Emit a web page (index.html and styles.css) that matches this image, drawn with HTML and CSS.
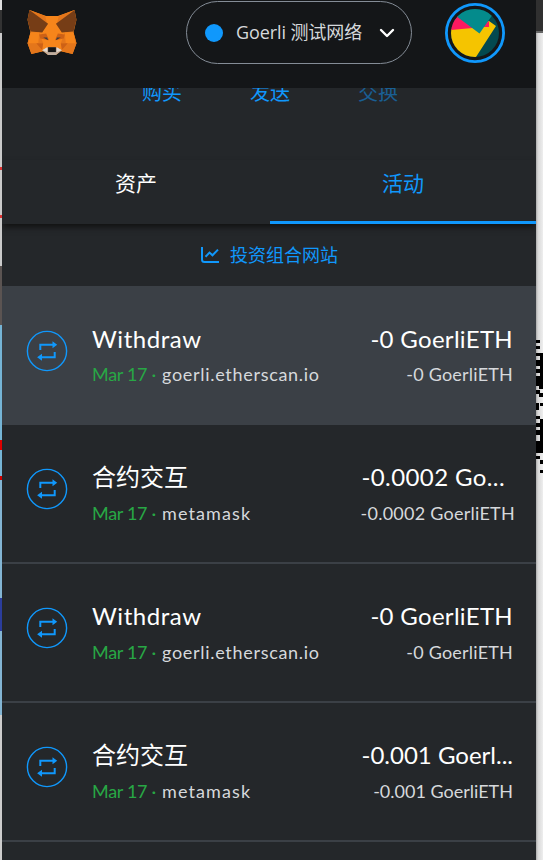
FILE: index.html
```html
<!DOCTYPE html>
<html lang="zh-CN">
<head>
<meta charset="utf-8">
<title>MetaMask</title>
<link rel="stylesheet" href="styles.css">
</head>
<body>
<svg class="symbols" width="0" height="0" aria-hidden="true">
  <symbol id="swap" viewBox="0 0 42 42">
    <circle cx="21" cy="21" r="19.6" fill="none" stroke="#1098fc" stroke-width="1.4"/>
    <path d="M14.3 20v-5.2H27M28.7 22v5.2H15.500" fill="none" stroke="#1098fc" stroke-width="2"/>
    <path d="M26.500 11.300v7l4.700-3.500zM16 23.700v7l-4.900-3.500z" fill="#1098fc"/>
  </symbol>
</svg>
<div class="page">
  <div class="edge-left"></div>
  <main class="panel">
    <header class="header">
      <svg class="fox" viewBox="0 0 50 48">
        <path fill="#f6851b" d="M2 0l17 6h12L48 0l2 10-3 13 3 11-4 11-12-3-5 4h-8l-5-4-12 3L0 34l3-11L0 10z"/>
        <path fill="#e4761b" d="M2 0l18 14-2-8zM48 0L30 14l2-8zM3 23h9l4 11H0zM47 23h-9l-4 11h16zM0 34h11l4 8-11 3zM50 34H39l-4 8 11 3z"/>
        <path fill="#763d16" d="M2 0l19 14-6 9-12-1L0 10zM48 0L29 14l6 9 12-1 3-12z"/>
        <path fill="#f6851b" d="M21 6h8l-2 17 2 14h-8l2-14zM3 23l9 0-1 11H1zM47 23h-9l1 11h10z"/>
        <path fill="#cd6116" d="M12 25l7-1 3 7-9-2zM38 25l-7-1-3 7 9-2zM9 34h7l-1 7zM41 34h-7l1 7z"/>
        <path fill="#3a3c43" d="M16 28l4 0 1 3zM34 28l-4 0-1 3z"/>
        <path fill="#c0ad9e" d="M15 41l6-3h8l6 3-6 5h-8z"/>
        <path fill="#e5dad0" d="M15 41l5-3v5zM35 41l-5-3v5z"/>
        <path fill="#161616" d="M21 38h8v5h-8z"/>
      </svg>
      <div class="network">
        <i class="dot"></i><span>Goerli 测试网络</span>
        <svg class="chevron" viewBox="0 0 16 10"><path d="M2 2l6 6 6-6" fill="none" stroke="#fff" stroke-width="2.4" stroke-linecap="round" stroke-linejoin="round"/></svg>
      </div>
      <svg class="avatar" viewBox="0 0 60 60">
        <defs><clipPath id="disc"><circle cx="30" cy="30" r="24"/></clipPath></defs>
        <circle cx="30" cy="30" r="28.6" fill="none" stroke="#1098fc" stroke-width="2.8"/>
        <g clip-path="url(#disc)">
          <path fill="#03494f" d="M0 0h60v60H0z"/>
          <path fill="#f5c400" d="M0 27l27-3 17-6 7 5-20 31-1 6H0z"/>
          <path fill="#fc1960" d="M0 27.500l33-3L12 12H0zM36 24l8-6v6z"/>
          <path fill="#048b8c" d="M7 10L34.500 30.500 53 4 30 0z"/>
        </g>
      </svg>
    </header>
    <nav class="actions"><span>购买</span><span>发送</span><span class="disabled">交换</span></nav>
    <div class="tabs"><div class="tab">资产</div><div class="tab active">活动</div></div>
    <a class="portfolio"><svg viewBox="0 0 18 16"><path d="M1 0v12.500Q1 15 3.500 15H18M4.500 9.800L8.500 5.600l3 2.700L17 2.600" fill="none" stroke="#1098fc" stroke-width="2"/></svg><span>投资组合网站</span></a>
    <section class="list">
      <article class="row hovered">
        <svg class="swap"><use href="#swap"/></svg>
        <div class="info"><h2 class="withdraw">Withdraw</h2><p><span class="date">Mar 17 ·</span><span class="site">goerli.etherscan.io</span></p></div>
        <div class="amount zero"><b>-0 GoerliETH</b><small>-0 GoerliETH</small></div>
      </article>
      <article class="row">
        <svg class="swap"><use href="#swap"/></svg>
        <div class="info"><h2>合约交互</h2><p><span class="date">Mar 17 ·</span><span class="site short">metamask</span></p></div>
        <div class="amount wide"><b>-0.0002 Go...</b><small>-0.0002 GoerliETH</small></div>
      </article>
      <article class="row">
        <svg class="swap"><use href="#swap"/></svg>
        <div class="info"><h2 class="withdraw">Withdraw</h2><p><span class="date">Mar 17 ·</span><span class="site">goerli.etherscan.io</span></p></div>
        <div class="amount zero"><b>-0 GoerliETH</b><small>-0 GoerliETH</small></div>
      </article>
      <article class="row">
        <svg class="swap"><use href="#swap"/></svg>
        <div class="info"><h2>合约交互</h2><p><span class="date">Mar 17 ·</span><span class="site short">metamask</span></p></div>
        <div class="amount"><b>-0.001 Goerl...</b><small>-0.001 GoerliETH</small></div>
      </article>
    </section>
  </main>
  <div class="edge-right">
    <svg class="code" viewBox="0 0 7 136" shape-rendering="crispEdges">
      <path d="M0 1h4v3H0zM0 7h4v3H0zM4 14h3v34H4zM0 14h4v3H0zM0 21h4v6H0zM0 30h4v4H0zM0 37h4v10H0zM0 51h4v4H0zM3 54h4v4H3zM3 47h4v3H3zM0 64h3v7H0zM4 64h3v3H4zM0 77h4v3H0zM4 80h3v4H4zM0 84h7v4H0zM4 88h3v26H4zM0 91h4v5H0zM0 102h4v12H0zM0 117h4v3H0zM4 121h3v4H4zM4 131h3v3H4z"/>
    </svg>
  </div>
</div>
</body>
</html>
```
FILE: styles.css
```css
* { box-sizing: border-box; }
body { margin: 0; background: #e8e8e8; font-family: Lato, "Noto Sans CJK SC", sans-serif; color: #fff; }
.symbols { position: absolute; }
.page { display: grid; grid-template-columns: 2px 534px 7px; height: 860px; overflow: hidden; }
.edge-left { background: linear-gradient(#ddd 0 10px, #333 10px 33px, #cacaca 33px 167px, #d33 167px 170px, #cacaca 170px 215px, #d33 215px 218px, #cacaca 218px 266px, #5b5452 266px 325px, #75b4d5 325px 440px, #d00 440px 450px, #75b4d5 450px 476px, #c00 476px 480px, #83b5d3 480px 598px, #2b3d9c 598px 631px, #83b5d3 631px 715px, #ccc 715px); }
.edge-right { background: linear-gradient(#303030 0 31px, #666 31px 33px, transparent 33px), linear-gradient(90deg, #aaa, #d8d8d8 2px, #eee); padding-top: 339px; }
.code { display: block; width: 7px; height: 136px; }
.panel { background: #24272a; overflow: hidden; }
.header { height: 88px; background: #141618; display: flex; align-items: flex-start; padding-left: 25px; }
.fox { width: 50px; height: 47px; margin-top: 10px; }
.network { width: 226px; height: 63px; margin: 1px 0 0 109px; border: 1px solid #848c96; border-radius: 32px; display: flex; align-items: center; padding-left: 18px; font: 18px "Open Sans", "Noto Sans CJK SC", sans-serif; color: #d6d9dc; white-space: nowrap; }
.dot { width: 18px; height: 18px; border-radius: 50%; background: #1098fc; margin-right: 13px; }
.network span { width: 127px; margin-top: -3px; letter-spacing: -.1px; }
.chevron { width: 16px; height: 10px; margin-left: 16px; }
.avatar { width: 60px; height: 60px; margin: 3px 0 0 33px; }
.actions { height: 72px; display: grid; grid-template-columns: 108px 108px 108px; padding-left: 106px; text-align: center; color: #1098fc; font-size: 20px; line-height: 20px; overflow: hidden; }
.actions span { margin-top: -6px; }
.disabled { opacity: .5; }
.tabs { height: 64px; display: grid; grid-template-columns: 268px 266px; background: #24272a; box-shadow: 0 4px 6px -1px #111; }
.tab { text-align: center; font-size: 21px; line-height: 46px; }
.active { color: #1098fc; border-bottom: 3px solid #1098fc; }
.portfolio { height: 62px; display: flex; align-items: center; padding-left: 199px; gap: 11px; font-size: 18px; color: #1098fc; }
.portfolio svg { width: 18px; height: 16px; }
.portfolio span { margin-top: -3px; }
.row { height: 139px; display: flex; align-items: flex-start; padding: 36px 23px 0 24px; border-bottom: 2px solid #3b4046; }
.hovered { background: #3b4046; padding-top: 37px; }
.swap { width: 42px; height: 42px; margin: 7px 24px 0 0; }
.info { width: 240px; }
h2, b { display: block; margin: 0; font-size: 24px; line-height: 32px; font-weight: 400; white-space: nowrap; }
.withdraw { letter-spacing: .55px; }
p, small { display: flex; margin: 6px 0 0; font-size: 18px; line-height: 26px; color: #d6d9dc; white-space: nowrap; }
.row:not(.hovered) p, .row:not(.hovered) small { margin-top: 7px; }
.date { width: 70px; color: #28a745; letter-spacing: -.3px; }
.site { letter-spacing: .7px; }
.short { letter-spacing: 1.1px; }
.amount { flex: 1; display: flex; flex-direction: column; align-items: flex-end; }
.zero b { letter-spacing: .3px; }
.zero small { letter-spacing: .2px; }
.wide { margin-right: -2px; }
.wide b { letter-spacing: .4px; margin-right: 10px; }
.wide small { letter-spacing: .25px; }
```
